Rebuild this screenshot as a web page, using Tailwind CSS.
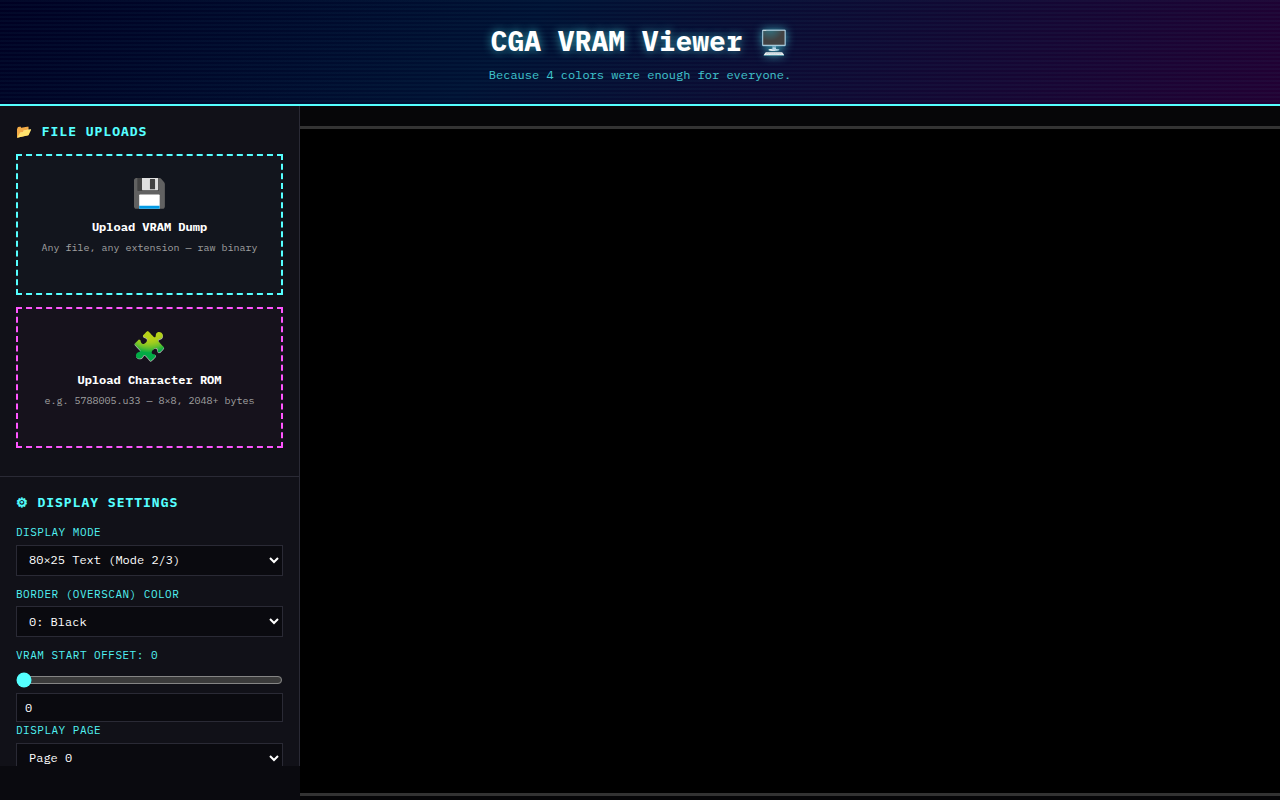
<!DOCTYPE html>
<html lang="en">
<head>
<meta charset="utf-8">
<title>CGA VRAM Viewer</title>
<script src="https://cdn.jsdelivr.net/npm/@tailwindcss/browser@4"></script>
</head>
<body class="h-screen overflow-hidden bg-[#0a0a0f] font-['IBM_Plex_Mono','Liberation_Mono',monospace] text-white flex flex-col">
<header class="relative h-[106px] shrink-0 border-b-2 border-[#55ffff] bg-[linear-gradient(135deg,#000022_0%,#001133_40%,#220033_100%)] pt-[23px] text-center">
  <div class="absolute inset-0 bg-[repeating-linear-gradient(0deg,transparent_0px,transparent_2px,rgba(85,255,255,0.03)_2px,rgba(85,255,255,0.03)_4px)]"></div>
  <h1 class="relative h-9 text-[28px] leading-9 font-bold [text-shadow:0_0_10px_rgba(85,255,255,0.6)]">CGA VRAM Viewer <span class="text-2xl leading-none">🖥️</span></h1>
  <p class="relative mt-2 text-xs leading-4 text-[#55ffff] opacity-75">Because 4 colors were enough for everyone.</p>
</header>
<div class="flex flex-1 min-h-0">
  <aside class="h-[660px] w-[300px] shrink-0 overflow-hidden border-r border-[#2a2a35] bg-[#111118]">
    <section class="h-[371px] border-b border-[#2a2a35] px-4 pt-4">
      <h2 class="text-[13px] leading-5 font-bold tracking-[1px] text-[#55ffff]">📂 FILE UPLOADS</h2>
      <div class="mt-3 h-[141px] border-2 border-dashed border-[#55ffff] bg-[#12151d] pt-[17px] text-center">
        <div class="text-[28px] leading-10">💾</div>
        <div class="mt-1.5 text-xs leading-4 font-bold">Upload VRAM Dump</div>
        <div class="mt-1.5 text-[10px] leading-[14px] text-[#a0a0a0]">Any file, any extension — raw binary</div>
      </div>
      <div class="mt-3 h-[141px] border-2 border-dashed border-[#ff55ff] bg-[#16121c] pt-[17px] text-center">
        <div class="text-[28px] leading-10">🧩</div>
        <div class="mt-1.5 text-xs leading-4 font-bold">Upload Character ROM</div>
        <div class="mt-1.5 text-[10px] leading-[14px] text-[#a0a0a0]">e.g. 5788005.u33 — 8×8, 2048+ bytes</div>
      </div>
    </section>
    <section class="px-4 pt-4">
      <h2 class="h-5 text-[13px] leading-5 font-bold tracking-[1px] text-[#55ffff]"><span class="font-['DejaVu_Sans'] [-webkit-text-stroke:0.6px_#55ffff]">⚙</span> DISPLAY SETTINGS</h2>
      <label class="mt-3 block text-[11px] leading-[14px] tracking-[0.5px] text-[#55ffff] opacity-95">DISPLAY MODE</label>
      <select class="mt-1.5 block h-[31px] w-full scheme-dark border border-[#2a2a35] bg-[#0a0a0f] px-2 pb-0.5 text-xs text-white"><option>80×25 Text (Mode 2/3)</option></select>
      <label class="mt-[11px] block text-[11px] leading-[14px] tracking-[0.5px] text-[#55ffff] opacity-95">BORDER (OVERSCAN) COLOR</label>
      <select class="mt-[5px] block h-[31px] w-full scheme-dark border border-[#2a2a35] bg-[#0a0a0f] px-2 text-xs text-white"><option>0: Black</option></select>
      <label class="mt-[11px] block text-[11px] leading-[14px] tracking-[0.5px] text-[#55ffff] opacity-95">VRAM START OFFSET: 0</label>
      <input type="range" value="0" class="mt-[10px] block h-4 w-full scheme-dark accent-[#55ffff]">
      <input type="text" value="0" class="mt-[5px] block h-[29px] w-full border border-[#2a2a35] bg-[#0a0a0f] px-2 text-xs text-white">
      <label class="mt-px block text-[11px] leading-[14px] tracking-[0.5px] text-[#55ffff] opacity-95">DISPLAY PAGE</label>
      <select class="mt-1.5 block h-[31px] w-full scheme-dark border border-[#2a2a35] bg-[#0a0a0f] px-2 pb-0.5 text-xs text-white"><option>Page 0</option></select>
    </section>
  </aside>
  <main class="flex flex-1 flex-col bg-[#060608] pt-5">
    <div class="h-[670px] shrink-0 border-y-3 border-[#333] bg-black"></div>
  </main>
</div>
</body>
</html>
